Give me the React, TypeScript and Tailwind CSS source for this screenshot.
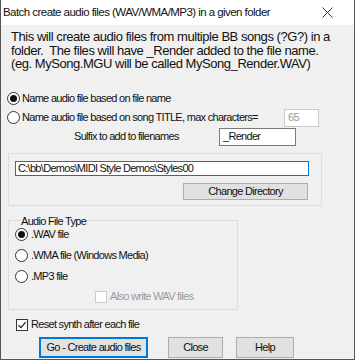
import { ReactNode } from "react";

const font = "font-['Liberation_Sans',Arial,sans-serif]";
const narrow = "text-[11px] tracking-[-0.7px] whitespace-nowrap";

function Radio({ checked }: { checked?: boolean }) {
  return (
    <span className="w-[13px] h-[13px] rounded-full border border-[#333] bg-white flex items-center justify-center shrink-0">
      {checked && <span className="w-[7px] h-[7px] rounded-full bg-[#111]" />}
    </span>
  );
}

function CheckBox({ checked, disabled }: { checked?: boolean; disabled?: boolean }) {
  return (
    <span
      className={`w-[12px] h-[12px] border bg-white flex items-center justify-center shrink-0 ${
        disabled ? "border-[#cccccc]" : "border-[#333]"
      }`}
    >
      {checked && (
        <svg width="10" height="10" viewBox="0 0 10 10">
          <path d="M1.5 5.2 L4 7.6 L8.6 2.2" stroke="#222" strokeWidth="1.2" fill="none" />
        </svg>
      )}
    </span>
  );
}

function Btn({ children, w, primary }: { children: ReactNode; w: string; primary?: boolean }) {
  return (
    <button
      className={`${w} ${narrow} bg-[#e1e1e1] text-[#111] flex items-center justify-center shrink-0 ${
        primary ? "border-2 border-[#0078d7]" : "border border-[#adadad]"
      }`}
    >
      {children}
    </button>
  );
}

export default function App() {
  return (
    <div className={`${font} w-[355px] h-[360px] bg-[#f0f0f0] border-x border-b border-[#555] flex flex-col text-[#111] overflow-hidden`}>
      <div className="h-[25px] bg-white flex items-center justify-between pl-[2px] pr-[21px] shrink-0">
        <span className="text-[11.5px] tracking-[-0.55px] whitespace-nowrap">
          Batch create audio files (WAV/WMA/MP3) in a given folder
        </span>
        <svg width="11" height="11" viewBox="0 0 11 11">
          <path d="M0.5 0.5 L10.5 10.5 M10.5 0.5 L0.5 10.5" stroke="#333" strokeWidth="1" />
        </svg>
      </div>

      <div className="flex flex-col px-[8px] pt-[5px]">
        <p className="text-[13px] leading-[13.5px] tracking-[-0.45px] pl-[2px] whitespace-nowrap">
          This will create audio files from multiple BB songs (?G?) in a
          <br />
          folder.&nbsp; The files will have _Render added to the file name.
          <br />
          (eg. MySong.MGU will be called MySong_Render.WAV)
        </p>

        <label className={`${narrow} mt-[19px] h-[18px] flex items-center gap-[2px] -ml-[2px]`}>
          <Radio checked />
          Name audio file based on file name
        </label>
        <div className={`${narrow} mt-[1px] h-[18px] flex items-center -ml-[2px]`}>
          <Radio />
          <span className="ml-[2px]">Name audio file based on song TITLE, max characters=</span>
          <span className="ml-auto mr-[27px] w-[35px] h-[18px] border border-[#cccccc] bg-white text-[#9a9a9a] pl-[3px] flex items-center">
            65
          </span>
        </div>
        <div className={`${narrow} mt-[1px] h-[18px] flex items-center`}>
          <span className="ml-[65px] w-[145px]">Sulfix to add to filenames</span>
          <span className="w-[77px] h-[18px] border border-[#7a7a7a] bg-white pl-[3px] flex items-center">
            _Render
          </span>
        </div>

        <div className="mt-[7px] -ml-[1px] w-[314px] border border-[#dcdcdc] px-[6px] pt-[7px] pb-[5px] flex flex-col">
          <div className={`${narrow} h-[15px] w-[294px] border border-[#0078d7] bg-white pl-[2px] flex items-center`}>
            C:\bb\Demos\MIDI Style Demos\Styles00
          </div>
          <div className="mt-[7px] flex justify-end pr-[7px]">
            <Btn w="w-[125px] h-[17px]">Change Directory</Btn>
          </div>
        </div>

        <fieldset className="mt-[8px] -ml-[1px] w-[230px] border border-[#dcdcdc] pl-[6px]">
          <legend className={`${narrow} px-[1px] ml-[5px] leading-[14px]`}>Audio File Type</legend>
          <label className={`${narrow} h-[14px] flex items-center gap-[3px]`}>
            <Radio checked />
            .WAV file
          </label>
          <label className={`${narrow} h-[27px] flex items-center gap-[3px]`}>
            <Radio />
            .WMA file (Windows Media)
          </label>
          <label className={`${narrow} h-[16px] flex items-center gap-[3px]`}>
            <Radio />
            .MP3 file
          </label>
          <label className={`${narrow} h-[24px] flex items-center gap-[3px] ml-[80px] text-[#9a9a9a]`}>
            <CheckBox disabled />
            Also write WAV files
          </label>
        </fieldset>

        <label className={`${narrow} mt-[8px] h-[14px] flex items-center gap-[3px] ml-[7px]`}>
          <CheckBox checked />
          Reset synth after each file
        </label>

        <div className="mt-[5px] flex pl-[30px]">
          <Btn w="w-[109px] h-[21px]" primary>
            Go - Create audio files
          </Btn>
          <span className="ml-[20px]">
            <Btn w="w-[55px] h-[21px]">Close</Btn>
          </span>
          <span className="ml-[13px]">
            <Btn w="w-[58px] h-[21px]">Help</Btn>
          </span>
        </div>
      </div>
    </div>
  );
}
